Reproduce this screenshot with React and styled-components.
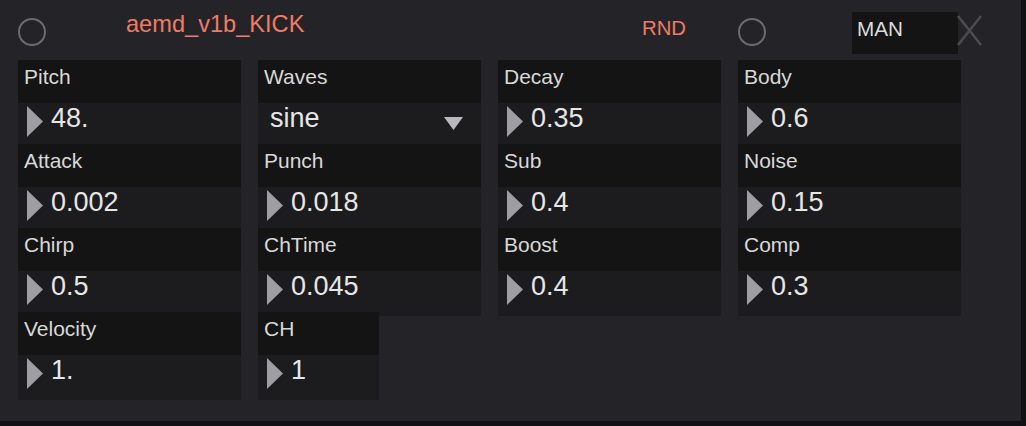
import React from 'react';
import styled, { createGlobalStyle } from 'styled-components';

const Global = createGlobalStyle`
  html, body { margin: 0; padding: 0; background: #111113; }
  body { font-family: "Liberation Sans", Arial, sans-serif; }
`;

const Panel = styled.div`
  width: 1021px;
  height: 421px;
  background: #242428;
  display: flex;
  flex-direction: column;
  overflow: hidden;
`;

const Header = styled.div`
  height: 60px;
  flex: none;
  display: flex;
  align-items: flex-start;
  padding-left: 18px;
  box-sizing: border-box;
`;

const Ring = styled.div`
  flex: none;
  width: 28px;
  height: 28px;
  box-sizing: border-box;
  border: 2.5px solid #6b6b6f;
  border-radius: 50%;
  margin-top: 18px;
`;

const Title = styled.div`
  flex: none;
  width: 516px;
  margin-left: 80px;
  margin-top: 11px;
  font-size: 23.6px;
  line-height: 26px;
  color: #f07b66;
`;

const Rnd = styled.div`
  flex: none;
  width: 96px;
  margin-top: 17px;
  font-size: 20.3px;
  line-height: 23px;
  color: #f07b66;
`;

const ManBox = styled.div`
  flex: none;
  width: 106px;
  height: 42px;
  margin-left: 86px;
  margin-top: 12px;
  padding: 5px 0 0 5px;
  box-sizing: border-box;
  background: #141414;
  font-size: 20.7px;
  line-height: 23px;
  color: #dcdcdc;
`;

const Close = styled.svg`
  flex: none;
  margin-left: -1px;
  margin-top: 15px;
`;

const Grid = styled.div`
  display: flex;
  align-items: flex-start;
  gap: 17px;
  padding-left: 18px;
`;

const Column = styled.div`
  width: 223px;
  display: flex;
  flex-direction: column;
  align-items: flex-start;
`;

const Cell = styled.div`
  width: ${p => p.$w || 223}px;
  display: flex;
  flex-direction: column;
`;

const Label = styled.div`
  height: 43px;
  box-sizing: border-box;
  padding: 5px 0 0 6px;
  background: #141414;
  font-size: 21px;
  line-height: 24px;
  color: #d8d8d8;
`;

const ValueRow = styled.div`
  height: 45px;
  margin-bottom: -4px;
  background: #1c1c1e;
  display: flex;
  align-items: flex-start;
  justify-content: ${p => (p.$menu ? 'space-between' : 'flex-start')};
  padding: ${p => (p.$menu ? '0 18px 0 12px' : '0')};
`;

const Arrow = styled.svg`
  flex: none;
  margin-left: 9px;
  margin-top: 3px;
`;

const Value = styled.div`
  margin-left: ${p => (p.$menu ? 0 : 8)}px;
  font-size: 27px;
  line-height: 30px;
  color: #e6e6e6;
`;

const Drop = styled.svg`
  flex: none;
  margin-top: 14px;
`;

const columns = [
  [
    { label: 'Pitch', value: '48.' },
    { label: 'Attack', value: '0.002' },
    { label: 'Chirp', value: '0.5' },
    { label: 'Velocity', value: '1.' },
  ],
  [
    { label: 'Waves', value: 'sine', menu: true },
    { label: 'Punch', value: '0.018' },
    { label: 'ChTime', value: '0.045' },
    { label: 'CH', value: '1', w: 121 },
  ],
  [
    { label: 'Decay', value: '0.35' },
    { label: 'Sub', value: '0.4' },
    { label: 'Boost', value: '0.4' },
  ],
  [
    { label: 'Body', value: '0.6' },
    { label: 'Noise', value: '0.15' },
    { label: 'Comp', value: '0.3' },
  ],
];

function Param({ label, value, menu, w }) {
  return (
    <Cell $w={w}>
      <Label>{label}</Label>
      <ValueRow $menu={menu}>
        {menu ? (
          <>
            <Value $menu>{value}</Value>
            <Drop width="19" height="13" viewBox="0 0 19 13">
              <polygon points="0,0 19,0 9.5,13" fill="#b9b9bd" />
            </Drop>
          </>
        ) : (
          <>
            <Arrow width="16" height="31" viewBox="0 0 16 31">
              <polygon points="0,0 16,15.5 0,31" fill="#9d9da2" />
            </Arrow>
            <Value>{value}</Value>
          </>
        )}
      </ValueRow>
    </Cell>
  );
}

export default function App() {
  return (
    <>
      <Global />
      <Panel>
        <Header>
          <Ring />
          <Title>aemd_v1b_KICK</Title>
          <Rnd>RND</Rnd>
          <Ring />
          <ManBox>MAN</ManBox>
          <Close width="25" height="31" viewBox="0 0 25 31">
            <line x1="1" y1="1" x2="24" y2="30" stroke="#4b4b50" strokeWidth="2.6" />
            <line x1="24" y1="1" x2="1" y2="30" stroke="#4b4b50" strokeWidth="2.6" />
          </Close>
        </Header>
        <Grid>
          {columns.map((col, i) => (
            <Column key={i}>
              {col.map(p => (
                <Param key={p.label} {...p} />
              ))}
            </Column>
          ))}
        </Grid>
      </Panel>
    </>
  );
}
